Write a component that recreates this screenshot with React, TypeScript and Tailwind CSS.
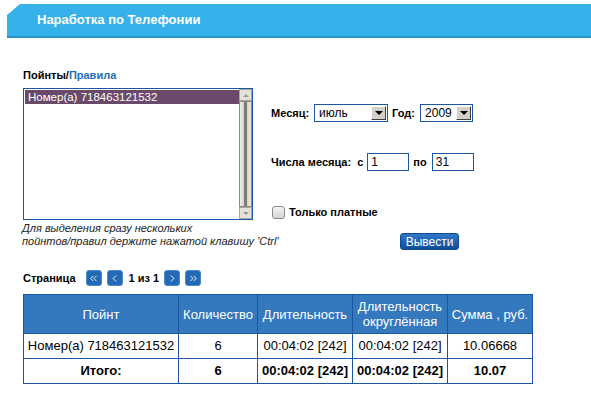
import React from 'react';
import { ChevronLeft, ChevronRight, ChevronsLeft, ChevronsRight } from 'lucide-react';

const font = { fontFamily: '"Liberation Sans", Arial, sans-serif' };

const DropArrow: React.FC = () => (
    <div className="w-[15px] h-[14px] bg-[#d4d0c8] border border-t-white border-l-white border-r-[#404040] border-b-[#404040] flex items-center justify-center">
        <div className="w-0 h-0 border-l-[4px] border-r-[4px] border-t-[4px] border-l-transparent border-r-transparent border-t-black" />
    </div>
);

const Select: React.FC<{ value: string; width: string }> = ({ value, width }) => (
    <div className={`${width} h-[18px] border border-[#1b56a3] bg-white flex items-center justify-between pl-[4px] pr-[1px]`}>
        <span className="text-[12px] font-normal text-black leading-none">{value}</span>
        <DropArrow />
    </div>
);

const PageBtn: React.FC<{ children: React.ReactNode }> = ({ children }) => (
    <div className="w-[16px] h-[16px] rounded-[3px] bg-[#2469b4] border border-[#4c8ad0] flex items-center justify-center text-white">
        {children}
    </div>
);

export default function App() {
    return (
        <div className="w-[591px] h-[398px] bg-white overflow-hidden pt-[4px]" style={font}>
            {/* Header bar */}
            <div className="ml-[7px] h-[34px] bg-[#36b1e9] border-b-2 border-[#2b93c6] [clip-path:polygon(13px_0,100%_0,100%_100%,0_100%,0_11px)] flex items-center pl-[30px]">
                <span className="text-white font-bold text-[13px]">Наработка по Телефонии</span>
            </div>

            <div className="pl-[23px]">
                <div className="flex mt-[30px]">
                    {/* Left column */}
                    <div className="w-[230px]">
                        <div className="h-[14px] leading-[14px] text-[11px] font-bold text-black">
                            Пойнты/<span className="text-[#1c6fb5]">Правила</span>
                        </div>
                        <div className="mt-[6px] h-[132px] border border-[#1b56a3] bg-white flex">
                            <div className="flex-1 pt-[1px] pl-[1px]">
                                <div className="h-[14px] bg-[#6a4a6a] text-white text-[11.5px] leading-[14px] pl-[3px]">
                                    Номер(а) 718463121532
                                </div>
                            </div>
                            <div className="w-[13px] flex flex-col bg-[#d8d8d2]">
                                <div className="h-[12px] bg-[#e2e2dc] border border-[#a8a8a0] flex items-center justify-center">
                                    <div className="w-0 h-0 border-l-[3px] border-r-[3px] border-b-[3px] border-l-transparent border-r-transparent border-b-[#9a9a92]" />
                                </div>
                                <div className="flex-1 border border-[#8a8a80] bg-gradient-to-r from-[#eeeeea] via-[#c8c8c0] to-[#eeeeea] flex justify-center">
                                    <div className="w-[3px] h-full bg-[#7c7e72]" />
                                </div>
                                <div className="h-[12px] bg-[#e2e2dc] border border-[#a8a8a0] flex items-center justify-center">
                                    <div className="w-0 h-0 border-l-[3px] border-r-[3px] border-t-[3px] border-l-transparent border-r-transparent border-t-[#9a9a92]" />
                                </div>
                            </div>
                        </div>
                        <div className="mt-[2px] -ml-[1px] text-[11px] italic leading-[13px] text-[#222] whitespace-nowrap">
                            Для выделения сразу нескольких
                            <br />
                            пойнтов/правил держите нажатой клавишу 'Ctrl'
                        </div>
                    </div>

                    {/* Right column */}
                    <div className="ml-[18px] text-[11px] font-bold text-black">
                        <div className="mt-[36px] flex items-center">
                            <span>Месяц:</span>
                            <div className="ml-[5px]"><Select value="июль" width="w-[74px]" /></div>
                            <span className="ml-[4px]">Год:</span>
                            <div className="ml-[5px]"><Select value="2009" width="w-[53px]" /></div>
                        </div>
                        <div className="mt-[31px] flex items-center">
                            <span>Числа месяца:&nbsp; с</span>
                            <div className="ml-[4px] w-[42px] h-[18px] border border-[#1b56a3] bg-white text-[12px] font-normal leading-[16px] pl-[3px]">1</div>
                            <span className="ml-[4px]">по</span>
                            <div className="ml-[5px] w-[42px] h-[18px] border border-[#1b56a3] bg-white text-[12px] font-normal leading-[16px] pl-[3px]">31</div>
                        </div>
                        <div className="mt-[33px] flex items-center h-[16px]">
                            <div className="ml-[1px] w-[13px] h-[13px] rounded-[3px] border border-[#8a8a8a] bg-gradient-to-b from-[#f4f4f4] to-[#d4d4d4]" />
                            <span className="ml-[4px]">Только платные</span>
                        </div>
                        <div className="mt-[13px] ml-[129px] w-[59px] h-[17px] rounded-[3px] bg-gradient-to-b from-[#2f78c6] to-[#0f4f9a] border border-[#0e4790] flex items-center justify-center">
                            <span className="text-white text-[12px] font-normal leading-none">Вывести</span>
                        </div>
                    </div>
                </div>

                {/* Pagination */}
                <div className="mt-[20px] h-[16px] flex items-center text-[11px] font-bold text-black">
                    <span>Страница</span>
                    <div className="ml-[10px]"><PageBtn><ChevronsLeft size={11} strokeWidth={2} /></PageBtn></div>
                    <div className="ml-[5px]"><PageBtn><ChevronLeft size={11} strokeWidth={2} /></PageBtn></div>
                    <span className="ml-[6px]">1 из 1</span>
                    <div className="ml-[5px]"><PageBtn><ChevronRight size={11} strokeWidth={2} /></PageBtn></div>
                    <div className="ml-[5px]"><PageBtn><ChevronsRight size={11} strokeWidth={2} /></PageBtn></div>
                </div>

                {/* Table */}
                <table className="mt-[8px] w-[509px] border-collapse text-[13px] text-black table-fixed">
                    <colgroup>
                        <col className="w-[155px]" />
                        <col className="w-[79px]" />
                        <col className="w-[95px]" />
                        <col className="w-[95px]" />
                        <col className="w-[85px]" />
                    </colgroup>
                    <thead>
                        <tr className="h-[39px] bg-[#3478bd] text-white">
                            <th className="border border-[#1b56a3] font-normal leading-[15px] px-[1px] whitespace-nowrap">Пойнт</th>
                            <th className="border border-[#1b56a3] font-normal leading-[15px] px-[1px] whitespace-nowrap">Количество</th>
                            <th className="border border-[#1b56a3] font-normal leading-[15px] px-[1px] whitespace-nowrap">Длительность</th>
                            <th className="border border-[#1b56a3] font-normal leading-[15px] px-[1px] whitespace-nowrap">Длительность<br />округлённая</th>
                            <th className="border border-[#1b56a3] font-normal leading-[15px] px-[1px] whitespace-nowrap">Сумма , руб.</th>
                        </tr>
                    </thead>
                    <tbody>
                        <tr className="h-[25px] text-center">
                            <td className="border border-[#1b56a3] px-[1px] whitespace-nowrap">Номер(а) 718463121532</td>
                            <td className="border border-[#1b56a3]">6</td>
                            <td className="border border-[#1b56a3] whitespace-nowrap">00:04:02 [242]</td>
                            <td className="border border-[#1b56a3] whitespace-nowrap">00:04:02 [242]</td>
                            <td className="border border-[#1b56a3]">10.06668</td>
                        </tr>
                        <tr className="h-[25px] text-center font-bold">
                            <td className="border border-[#1b56a3]">Итого:</td>
                            <td className="border border-[#1b56a3]">6</td>
                            <td className="border border-[#1b56a3] whitespace-nowrap">00:04:02 [242]</td>
                            <td className="border border-[#1b56a3] whitespace-nowrap">00:04:02 [242]</td>
                            <td className="border border-[#1b56a3]">10.07</td>
                        </tr>
                    </tbody>
                </table>
            </div>
        </div>
    );
}
